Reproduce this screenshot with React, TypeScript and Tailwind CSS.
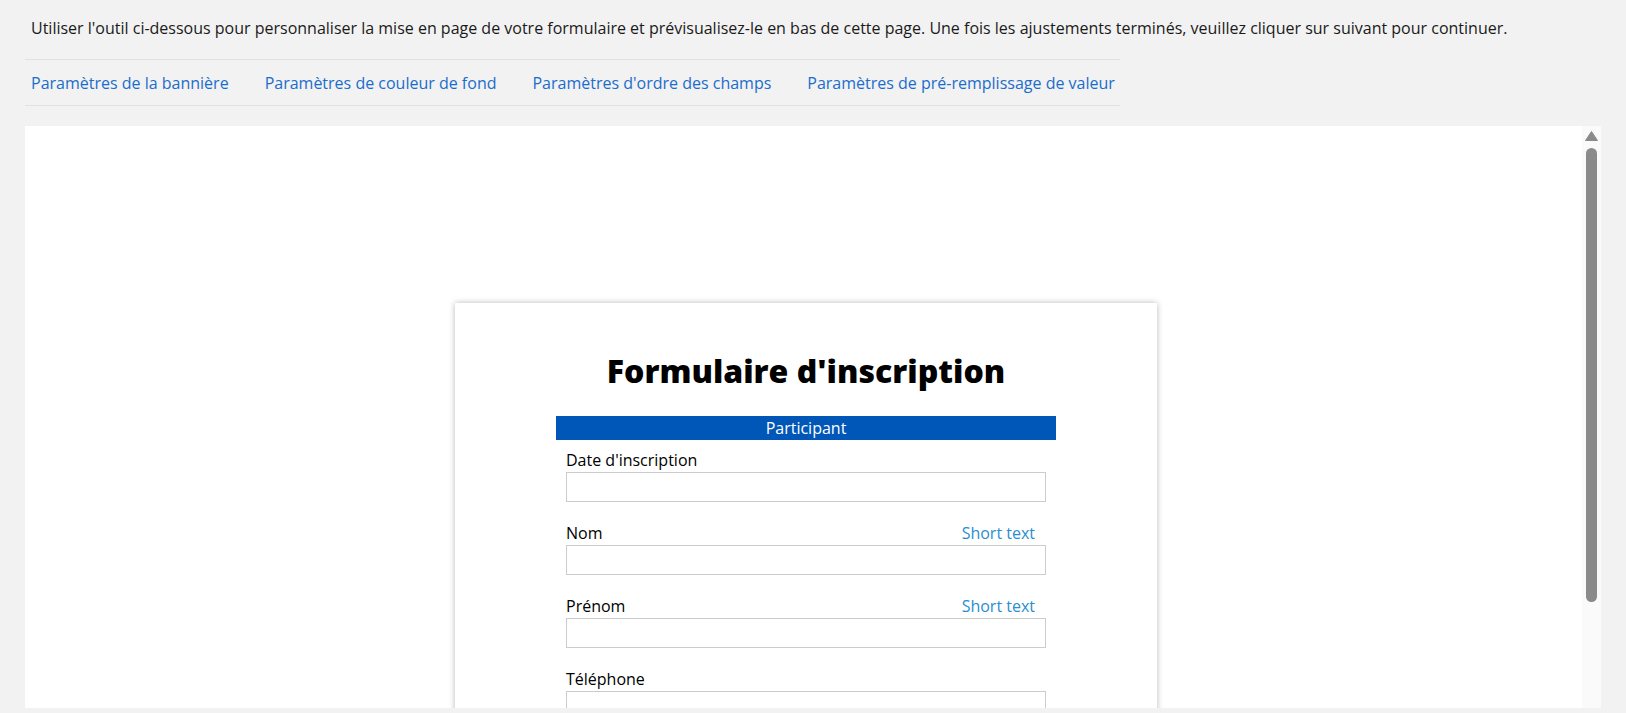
import React from "react";

type Field = {
  label: string;
  hint?: string;
};

const tabs = [
  "Paramètres de la bannière",
  "Paramètres de couleur de fond",
  "Paramètres d'ordre des champs",
  "Paramètres de pré-remplissage de valeur",
];

const fields: Field[] = [
  { label: "Date d'inscription" },
  { label: "Nom", hint: "Short text" },
  { label: "Prénom", hint: "Short text" },
  { label: "Téléphone" },
];

function FormField({ field }: { field: Field }) {
  return (
    <div className="mb-[21px]">
      <div className="flex items-center justify-between pr-[11px] text-[16px] leading-[20px] text-black">
        <span>{field.label}</span>
        {field.hint && <span className="text-[#2a8ed0]">{field.hint}</span>}
      </div>
      <div className="mt-[2px] h-[30px] border border-[#cccccc] bg-white" />
    </div>
  );
}

export default function App() {
  return (
    <main className="h-[713px] overflow-hidden bg-[#f2f2f2] px-[25px] font-['Open_Sans',sans-serif]">
      <p className="pl-[6px] pt-[18px] text-[16px] leading-[20px] text-[#1a1a1a] whitespace-nowrap">
        Utiliser l'outil ci-dessous pour personnaliser la mise en page de votre formulaire et prévisualisez-le en bas de cette page. Une fois les ajustements terminés, veuillez cliquer sur suivant pour continuer.
      </p>

      <nav className="mt-[21px] flex h-[47px] w-[1095px] items-center gap-[36px] border-y border-[#e1e1e1] pl-[6px]">
        {tabs.map((tab) => (
          <a key={tab} href="#" className="text-[16px] leading-[20px] text-[#1a6dcc] whitespace-nowrap">
            {tab}
          </a>
        ))}
      </nav>

      <div className="mt-[20px] flex h-[582px]">
        <div className="flex-1 overflow-hidden bg-white pl-[5px]">
          <div className="mx-auto mt-[177px] w-[702px] bg-white pb-10 shadow-[0_0_6px_rgba(0,0,0,0.28)]">
            <h1 className="pt-[45px] text-center text-[32px] leading-[46px] font-extrabold text-black">
              Formulaire d'inscription
            </h1>
            <div className="mx-auto mt-[22px] w-[500px]">
              <div className="h-[24px] bg-[#0057b8] text-center text-[16px] leading-[24px] text-white">
                Participant
              </div>
              <div className="px-[10px] pt-[10px]">
                {fields.map((field) => (
                  <FormField key={field.label} field={field} />
                ))}
              </div>
            </div>
          </div>
        </div>

        <div className="flex w-[19px] flex-col items-center bg-[#fafafa] pt-[5px]">
          <svg width="13" height="10" viewBox="0 0 13 10">
            <path d="M6.5 0.5 L12.5 9.5 L0.5 9.5 Z" fill="#8a8a8a" strokeLinejoin="round" stroke="#8a8a8a" />
          </svg>
          <div className="mt-[7px] h-[454px] w-[11px] rounded-full bg-[#8a8a8a]" />
        </div>
      </div>
    </main>
  );
}
